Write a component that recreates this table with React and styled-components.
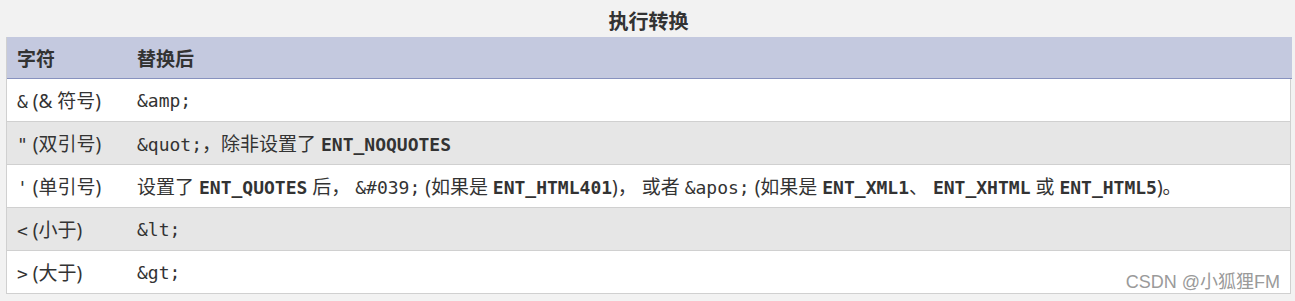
import React from 'react'
import styled, { createGlobalStyle } from 'styled-components'

const Global = createGlobalStyle`
  body {
    margin: 0;
    background: #f2f2f2;
    font-family: "Noto Sans", "Noto Sans CJK SC", sans-serif;
    color: #333;
  }
`

const Page = styled.div`
  position: relative;
  padding: 0 4px 0 6px;
  height: 301px;
  box-sizing: border-box;
`

const Caption = styled.div`
  height: 37px;
  display: flex;
  align-items: center;
  justify-content: center;
  font-weight: 700;
  font-size: 20px;
  padding-top: 4px;
  box-sizing: border-box;
`

const Table = styled.div`
  display: flex;
  flex-direction: column;
  border: 1px solid #d0d0d0;
  border-top: none;
`

const Row = styled.div`
  display: grid;
  grid-template-columns: 120px 1fr;
  height: ${p => p.$head ? 41 : 42}px;
  align-items: center;
  background: ${p => p.$head ? '#c4c9df' : p.$alt ? '#e6e6e6' : '#fff'};
  border-bottom: 1px solid ${p => p.$head ? '#8892bf' : '#d0d0d0'};
  font-weight: ${p => p.$head ? 700 : 400};
  font-size: 19px;
  white-space: nowrap;
  margin-right: ${p => p.$head ? '-2px' : '0'};
  &:last-child { border-bottom: none; }
`

const Cell = styled.div`
  padding-left: 10px;
`

const Code = styled.code`
  font-family: "DejaVu Sans Mono", "Liberation Mono", monospace;
  font-size: 18px;
  font-weight: ${p => p.$bold ? 700 : 400};
`

const Mark = styled.div`
  position: absolute;
  right: 15px;
  bottom: 8px;
  font-family: "Liberation Sans", "Noto Sans CJK SC", sans-serif;
  font-size: 18px;
  color: #9a9a9a;
`

const rows = [
  [<><Code>&amp;</Code> (&amp; 符号)</>, <Code>&amp;amp;</Code>],
  [<><Code>"</Code> (双引号)</>, <><Code>&amp;quot;</Code>，除非设置了 <Code $bold>ENT_NOQUOTES</Code></>],
  [<><Code>'</Code> (单引号)</>, <>设置了 <Code $bold>ENT_QUOTES</Code> 后， <Code>&amp;#039;</Code> (如果是 <Code $bold>ENT_HTML401</Code>)， 或者 <Code>&amp;apos;</Code> (如果是 <Code $bold>ENT_XML1</Code>、 <Code $bold>ENT_XHTML</Code> 或 <Code $bold>ENT_HTML5</Code>)。</>],
  [<><Code>&lt;</Code> (小于)</>, <Code>&amp;lt;</Code>],
  [<><Code>&gt;</Code> (大于)</>, <Code>&amp;gt;</Code>],
]

export default function App() {
  return (
    <Page>
      <Global />
      <Caption>执行转换</Caption>
      <Table>
        <Row $head>
          <Cell>字符</Cell>
          <Cell>替换后</Cell>
        </Row>
        {rows.map((r, i) => (
          <Row key={i} $alt={i % 2 === 1}>
            <Cell>{r[0]}</Cell>
            <Cell>{r[1]}</Cell>
          </Row>
        ))}
      </Table>
      <Mark>CSDN @小狐狸FM</Mark>
    </Page>
  )
}
